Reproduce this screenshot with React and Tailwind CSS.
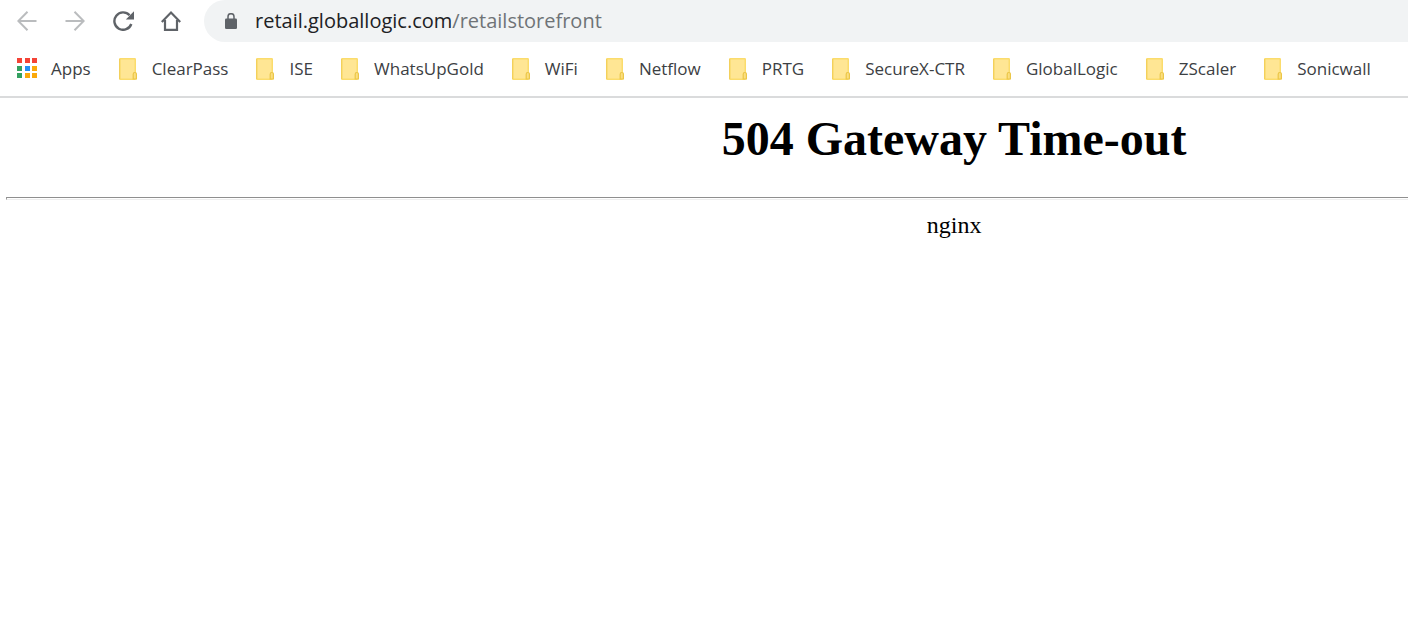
const bookmarks = ['ClearPass', 'ISE', 'WhatsUpGold', 'WiFi', 'Netflow', 'PRTG', 'SecureX-CTR', 'GlobalLogic', 'ZScaler', 'Sonicwall'];

const appColors = ['#f44336', '#f44336', '#f44336', '#34a160', '#2390f5', '#fba90a', '#34a160', '#fba90a', '#fba90a'];

function AppsIcon() {
  return (
    <svg width="20" height="22" viewBox="0 0 20 22" className="shrink-0" aria-hidden="true" shapeRendering="crispEdges">
      {appColors.map((color, i) => (
        <rect key={i} x={[0, 8, 15][i % 3]} y={[0, 8, 15][Math.floor(i / 3)]} width="5" height="5" fill={color} />
      ))}
    </svg>
  );
}

function FolderIcon() {
  return (
    <svg width="18" height="22" viewBox="0 0 18 22" className="shrink-0" aria-hidden="true">
      <rect x="0.75" y="0.75" width="15.5" height="20.5" rx="0.5" fill="#ffe694" stroke="#fbdc6c" strokeWidth="1.5" />
      <path d="M.6 1v20" stroke="#f3d05c" strokeWidth="1.2" />
      <path d="M14.200 21v-4.800q0-1.700 1.600-1.700t1.600 1.700V21z" fill="#fbdf80" stroke="#ebc647" strokeWidth="1.200" />
    </svg>
  );
}

function BackIcon() {
  return (
    <svg width="20" height="20" viewBox="0 0 20 20" fill="none" stroke="#babcbe" strokeWidth="2" aria-hidden="true">
      <path d="M19.500 10H1.500M10.500 .8L1.300 10l9.200 9.200" />
    </svg>
  );
}

function ForwardIcon() {
  return (
    <svg width="20" height="20" viewBox="0 0 20 20" fill="none" stroke="#babcbe" strokeWidth="2" aria-hidden="true">
      <path d="M.5 10h18M9.500 .8l9.200 9.200-9.200 9.200" />
    </svg>
  );
}

function ReloadIcon() {
  return (
    <svg width="21" height="20" viewBox="0 0 21 20" aria-hidden="true">
      <path d="M18.300 13A8.700 8.700 0 1 1 16.600 4.300" fill="none" stroke="#5f6368" strokeWidth="2.400" />
      <path d="M21 .3V8.500h-8.200z" fill="#5f6368" />
    </svg>
  );
}

function HomeIcon() {
  return (
    <svg width="20" height="20" viewBox="0 0 20 20" fill="none" stroke="#5f6368" strokeWidth="2.200" aria-hidden="true">
      <path d="M.8 11L10 1.600 19.200 11M4 9v9.900h12V9" />
    </svg>
  );
}

function LockIcon() {
  return (
    <svg width="12" height="16" viewBox="0 0 12 16" className="shrink-0" aria-hidden="true">
      <rect y="5.500" width="12" height="10.500" rx="1.300" fill="#5f6368" />
      <path d="M3 6V3.700a3 3 0 0 1 6 0V6" fill="none" stroke="#5f6368" strokeWidth="1.500" />
    </svg>
  );
}

const navButtons = [
  ['Back', BackIcon],
  ['Forward', ForwardIcon],
  ['Reload', ReloadIcon],
  ['Home', HomeIcon],
];

export default function App() {
  return (
    <div className="min-h-screen overflow-hidden bg-white">
      <header className="border-b-2 border-[#dadbdc] font-['Open_Sans',sans-serif]">
        <div className="flex h-[42px]">
          <nav aria-label="Navigation" className="flex shrink-0 pl-[3px]">
            {navButtons.map(([label, Icon]) => (
              <button key={label} type="button" aria-label={label} className="flex w-12 items-center justify-center">
                <Icon />
              </button>
            ))}
          </nav>
          <div className="ml-[9px] flex min-w-0 flex-1 items-center gap-[18px] rounded-l-full bg-[#f1f3f4] pl-[21px]">
            <LockIcon />
            <a href="#" className="text-xl whitespace-nowrap text-[#202124]">
              retail.globallogic.com<span className="text-[#6f7377]">/retailstorefront</span>
            </a>
          </div>
        </div>
        <nav aria-label="Bookmarks" className="flex h-[54px] items-center gap-7 pl-[17px] text-[17px] whitespace-nowrap text-[#3c4043]">
          <a href="#" className="flex items-center gap-[14px]">
            <AppsIcon />
            Apps
          </a>
          {bookmarks.map((name) => (
            <a key={name} href="#" className="flex items-center gap-[15px]">
              <FolderIcon />
              {name}
            </a>
          ))}
        </nav>
      </header>
      <main className="w-[135.1%] pt-[13px] pl-1.5 text-center font-['Liberation_Serif',serif] text-black">
        <h1 className="text-5xl leading-[56px] font-bold">504 Gateway Time-out</h1>
        <hr className="mt-[30px] h-[3px] border border-[#eeeeee] border-t-[#8f8f8f] border-l-[#9a9a9a]" />
        <p className="mt-[11px] text-2xl leading-7">nginx</p>
      </main>
    </div>
  );
}
